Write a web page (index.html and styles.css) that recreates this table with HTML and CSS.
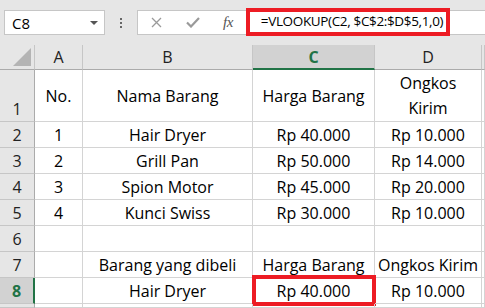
FILE: index.html
```html
<!DOCTYPE html>
<html>
<head>
<meta charset="utf-8">
<link rel="stylesheet" href="styles.css">
</head>
<body>
<div class="toolbar">
  <div class="namebox"><span class="name">C8</span><span class="caret"></span></div>
  <div class="dots"><i></i><i></i><i></i></div>
  <div class="fbar">
    <svg class="ico-x" width="11" height="11" viewBox="0 0 11 11"><path d="M1 1L10 10M10 1L1 10" stroke="#9a9a9a" stroke-width="1.3" fill="none"/></svg>
    <svg class="ico-ok" width="14" height="11" viewBox="0 0 14 11"><path d="M1 5.5L5 9.5L13 1" stroke="#9a9a9a" stroke-width="2.2" fill="none"/></svg>
    <span class="fx">fx</span>
    <span class="formula">=VLOOKUP(C2, $C$2:$D$5,1,0)</span>
  </div>
</div>
<div class="sheet">
  <div class="c hd corner"><svg width="18" height="18" viewBox="0 0 18 18"><path d="M18 0V18H0Z" fill="#b4b4b4"/></svg></div>
  <div class="c hd">A</div>
  <div class="c hd">B</div>
  <div class="c hd sel-col">C</div>
  <div class="c hd">D</div>
  <div class="c hd"></div>

  <div class="c rh">1</div>
  <div class="c mid">No.</div>
  <div class="c mid">Nama Barang</div>
  <div class="c mid">Harga Barang</div>
  <div class="c mid wrap">Ongkos Kirim</div>
  <div class="c"></div>

  <div class="c rh">2</div><div class="c">1</div><div class="c">Hair Dryer</div><div class="c">Rp 40.000</div><div class="c">Rp 10.000</div><div class="c"></div>
  <div class="c rh">3</div><div class="c">2</div><div class="c">Grill Pan</div><div class="c">Rp 50.000</div><div class="c">Rp 14.000</div><div class="c"></div>
  <div class="c rh">4</div><div class="c">3</div><div class="c">Spion Motor</div><div class="c">Rp 45.000</div><div class="c">Rp 20.000</div><div class="c"></div>
  <div class="c rh">5</div><div class="c">4</div><div class="c">Kunci Swiss</div><div class="c">Rp 30.000</div><div class="c">Rp 10.000</div><div class="c"></div>
  <div class="c rh">6</div><div class="c"></div><div class="c"></div><div class="c"></div><div class="c"></div><div class="c"></div>
  <div class="c rh">7</div><div class="c"></div><div class="c">Barang yang dibeli</div><div class="c">Harga Barang</div><div class="c">Ongkos Kirim</div><div class="c"></div>
  <div class="c rh sel-row">8</div><div class="c"></div><div class="c">Hair Dryer</div><div class="c active">Rp 40.000<span class="mark"></span></div><div class="c">Rp 10.000</div><div class="c"></div>
  <div class="c rh"></div><div class="c"></div><div class="c"></div><div class="c"></div><div class="c"></div><div class="c"></div>
</div>
</body>
</html>
```
FILE: styles.css
```css
* { box-sizing: border-box; }
html, body { margin: 0; padding: 0; }
body {
  width: 485px;
  height: 308px;
  overflow: hidden;
  background: #e6e6e6;
  font-family: "Open Sans", "Noto Sans", sans-serif;
  color: #000;
}
.toolbar {
  height: 45px;
  display: flex;
  align-items: flex-start;
  padding-top: 10px;
}
.namebox {
  margin-left: 4px;
  width: 101px;
  height: 25px;
  background: #fff;
  border: 1px solid #c6c6c6;
  display: flex;
  align-items: center;
  padding-left: 7px;
  padding-right: 6px;
}
.name { flex: 1; font-size: 15px; line-height: 20px; }
.caret {
  width: 0; height: 0;
  border-left: 4px solid transparent;
  border-right: 4px solid transparent;
  border-top: 4px solid #555;
}
.dots {
  width: 32px;
  height: 25px;
  display: flex;
  flex-direction: column;
  align-items: center;
  justify-content: center;
  gap: 2px;
}
.dots i { display: block; width: 2px; height: 2px; background: #666; }
.fbar {
  flex: 1;
  height: 25px;
  background: #fff;
  border: 1px solid #c6c6c6;
  border-right: none;
  display: flex;
  align-items: center;
}
.ico-x { margin-left: 13px; }
.ico-ok { margin-left: 24px; }
.fx {
  margin-left: 23px;
  font-family: "Liberation Serif", serif;
  font-style: italic;
  font-size: 15px;
  color: #555;
  letter-spacing: -0.5px;
}
.formula {
  margin-left: 13px;
  align-self: flex-end;
  margin-bottom: -2px;
  height: 28px;
  width: 204px;
  border: 4px solid #ed1c24;
  font-size: 13.5px;
  line-height: 19px;
  padding-left: 11px;
  letter-spacing: -0.35px;
  white-space: nowrap;
}
.sheet {
  display: grid;
  grid-template-columns: 35px 48px 170px 122px 107px 3px;
  grid-template-rows: 25px 52px repeat(7, 26px) 4px;
  background: #fff;
}
.c {
  border-right: 1px solid #d4d4d4;
  border-bottom: 1px solid #d4d4d4;
  display: flex;
  align-items: flex-end;
  justify-content: center;
  font-size: 16px;
  line-height: 20px;
  padding-bottom: 2px;
  white-space: nowrap;
  position: relative;
}
.hd {
  background: #e6e6e6;
  border-right-color: #c6c6c6;
  border-bottom-color: #ababab;
  align-items: center;
  padding-bottom: 0;
  color: #222;
}
.corner { justify-content: flex-end; padding: 4px 3px 3px 0; align-items: flex-end; }
.sel-col {
  background: #d2d2d2;
  color: #217346;
  font-weight: 700;
  border-bottom: 2px solid #217346;
}
.rh {
  background: #e6e6e6;
  border-right-color: #ababab;
  border-bottom-color: #c6c6c6;
  color: #222;
}
.sel-row {
  background: #d2d2d2;
  color: #217346;
  font-weight: 700;
  border-right: 2px solid #217346;
}
.mid { align-items: center; padding-bottom: 0; }
.wrap { white-space: normal; width: 107px; text-align: center; line-height: 25px; padding: 0 20px; }
.mark {
  position: absolute;
  top: -3px;
  left: -1px;
  right: -2px;
  bottom: -3px;
  border: 4px solid #ed1c24;
}
```
